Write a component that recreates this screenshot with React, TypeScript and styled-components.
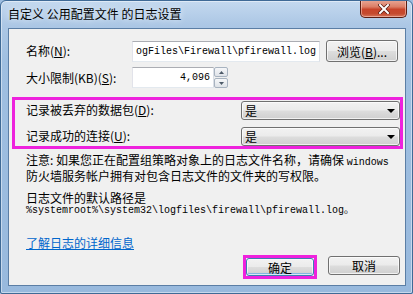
import React from "react";
import styled, { createGlobalStyle } from "styled-components";

const Global = createGlobalStyle`
  html, body { margin: 0; padding: 0; background: #9dbde0; }
  body { font-family: "Noto Sans CJK SC", "Liberation Sans", sans-serif; }
`;

const Window = styled.div`
  box-sizing: border-box;
  width: 413px;
  height: 294px;
  display: flex;
  flex-direction: column;
  padding: 0 6px 7px 7px;
  background: linear-gradient(180deg, #c4d9ef 0px, #acc7e5 24px, #9fbfe1 60px, #98b9dd 100%);
  border: 1px solid #3f6a96;
  border-radius: 6px 6px 2px 2px;
  box-shadow: inset 0 0 0 1px rgba(255, 255, 255, 0.45);
  overflow: hidden;
`;

const TitleBar = styled.div`
  height: 27px;
  display: flex;
  justify-content: space-between;
  align-items: flex-start;
`;

const Title = styled.div`
  margin-top: 6px;
  font-size: 12px;
  line-height: 14px;
  color: #000;
  white-space: nowrap;
  text-shadow: 0 0 6px rgba(255, 255, 255, 0.9);
`;

const CloseButton = styled.div`
  width: 47px;
  height: 18px;
  margin-top: -1px;
  margin-right: -1px;
  box-sizing: border-box;
  border: 1px solid #5b1d12;
  border-top: none;
  border-radius: 0 0 5px 5px;
  background: linear-gradient(180deg, #e9a897 0%, #dc7e66 40%, #c8442a 55%, #c54a2e 80%, #d6755b 100%);
  box-shadow: inset 0 0 0 1px rgba(255, 220, 210, 0.5);
  display: flex;
  align-items: center;
  justify-content: center;
`;

const Client = styled.div`
  flex: 1;
  display: flex;
  flex-direction: column;
  background: #f0f0f0;
  border: 1px solid #5b7ea5;
  font-size: 12px;
  color: #000;
`;

const Row = styled.div<{ $top: number; $h: number }>`
  display: flex;
  align-items: center;
  height: ${(p) => p.$h}px;
  margin-top: ${(p) => p.$top}px;
  padding-left: 17px;
`;

const Label = styled.div<{ $w: number }>`
  width: ${(p) => p.$w}px;
  flex: none;
  white-space: nowrap;
  line-height: 14px;
`;

const TextInput = styled.div<{ $w: number }>`
  box-sizing: border-box;
  width: ${(p) => p.$w}px;
  height: 21px;
  display: flex;
  justify-content: flex-end;
  background: #fff;
  border: 1px solid #abadb3;
  border-left-color: #e2e3ea;
  border-right-color: #dbdfe6;
  border-bottom-color: #e3e9ef;
  font-family: "Liberation Mono", monospace;
  font-size: 10px;
  line-height: 19px;
  padding: 0 3px 0 2px;
  overflow: hidden;
  white-space: nowrap;
`;

const PushButton = styled.div<{ $w: number; $h: number; $default?: boolean }>`
  box-sizing: border-box;
  width: ${(p) => p.$w}px;
  height: ${(p) => p.$h}px;
  flex: none;
  border: 1px solid ${(p) => (p.$default ? "#3c7fb1" : "#707070")};
  border-radius: 3px;
  background: linear-gradient(180deg, #f2f2f2 0%, #ebebeb 48%, #dddddd 52%, #cfcfcf 100%);
  box-shadow: inset 0 0 0 1px rgba(255, 255, 255, 0.7)${(p) =>
    p.$default ? ", inset 0 -2px 0 0 #7fb8e0" : ""};
  display: flex;
  align-items: center;
  justify-content: center;
  font-size: 12px;
  white-space: nowrap;
`;

const BrowseButton = styled(PushButton)`
  margin-left: 6px;
`;

const Spinner = styled.div`
  width: 14px;
  height: 21px;
  display: flex;
  flex-direction: column;
  gap: 1px;
`;

const SpinPart = styled.div`
  flex: 1;
  box-sizing: border-box;
  border: 1px solid #a8b3c0;
  border-radius: 2px;
  background: linear-gradient(180deg, #f6f7f9, #dfe3e8);
  display: flex;
  align-items: center;
  justify-content: center;
`;

const Highlight = styled.div`
  margin: 9px 2px 0 3px;
  border: 3px solid #ee22dd;
  display: flex;
  flex-direction: column;
  gap: 6px;
`;

const BoxRow = styled.div`
  display: flex;
  align-items: center;
  height: 20px;
  padding-left: 11px;
`;

const Select = styled.div`
  box-sizing: border-box;
  width: 159px;
  height: 19px;
  border: 1px solid #707070;
  border-radius: 3px;
  background: linear-gradient(180deg, #f2f2f2 0%, #ebebeb 48%, #dddddd 52%, #cfcfcf 100%);
  box-shadow: inset 0 0 0 1px rgba(255, 255, 255, 0.7);
  display: flex;
  align-items: center;
  justify-content: space-between;
  padding: 0 4px 0 3px;
  font-size: 12px;
`;

const Arrow = styled.div`
  width: 0;
  height: 0;
  border-left: 4px solid transparent;
  border-right: 4px solid transparent;
  border-top: 4px solid #000;
  margin-top: 1px;
`;

const Text = styled.div<{ $top: number; $lh: number; $mono?: boolean }>`
  margin-top: ${(p) => p.$top}px;
  padding-left: 17px;
  line-height: ${(p) => p.$lh}px;
  white-space: nowrap;
  font-family: ${(p) =>
    p.$mono ? '"Liberation Mono", "Noto Sans CJK SC", monospace' : '"Noto Sans CJK SC", "Liberation Sans", sans-serif'};
  font-size: ${(p) => (p.$mono ? 10 : 12)}px;
`;

const Mono = styled.span`
  font-family: "Liberation Mono", monospace;
  font-size: 10px;
`;

const Link = styled.a`
  margin-top: 20px;
  margin-left: 17px;
  align-self: flex-start;
  line-height: 12px;
  color: #0066cc;
  text-decoration: underline;
  font-size: 12px;
`;

const ButtonRow = styled.div`
  margin-top: 6px;
  display: flex;
  justify-content: flex-end;
  align-items: flex-start;
  gap: 11px;
  padding-right: 5px;
`;

const FocusMark = styled.div`
  border: 3px solid #ee22dd;
`;

const CancelWrap = styled.div`
  margin-top: 1px;
`;

const Tri = ({ up }: { up?: boolean }) => (
  <svg width="5" height="3" viewBox="0 0 5 3">
    <path d={up ? "M0 3 L2.5 0 L5 3 Z" : "M0 0 L2.5 3 L5 0 Z"} fill="#4d5a68" />
  </svg>
);

export default function App() {
  return (
    <>
      <Global />
      <Window>
        <TitleBar>
          <Title>自定义 公用配置文件 的日志设置</Title>
          <CloseButton>
            <svg width="12" height="10" viewBox="0 0 12 10">
              <path d="M2 1 L10 9 M10 1 L2 9" stroke="#5a1a10" strokeWidth="3.4" strokeLinecap="square" />
              <path d="M2 1 L10 9 M10 1 L2 9" stroke="#fff" strokeWidth="2" strokeLinecap="square" />
            </svg>
          </CloseButton>
        </TitleBar>
        <Client>
          <Row $top={11} $h={22}>
            <Label $w={106}>
              名称(<u>N</u>):
            </Label>
            <TextInput $w={188}>ogFiles\Firewall\pfirewall.log</TextInput>
            <BrowseButton $w={72} $h={22}>
              浏览(<u>B</u>)...
            </BrowseButton>
          </Row>
          <Row $top={5} $h={21}>
            <Label $w={106}>
              大小限制(KB)(<u>S</u>):
            </Label>
            <TextInput $w={82}>4,096</TextInput>
            <Spinner>
              <SpinPart>
                <Tri up />
              </SpinPart>
              <SpinPart>
                <Tri />
              </SpinPart>
            </Spinner>
          </Row>
          <Highlight>
            <BoxRow>
              <Label $w={215}>
                记录被丢弃的数据包(<u>D</u>):
              </Label>
              <Select>
                <span>是</span>
                <Arrow />
              </Select>
            </BoxRow>
            <BoxRow>
              <Label $w={215}>
                记录成功的连接(<u>U</u>):
              </Label>
              <Select>
                <span>是</span>
                <Arrow />
              </Select>
            </BoxRow>
          </Highlight>
          <Text $top={4} $lh={13}>
            注意: 如果您正在配置组策略对象上的日志文件名称，请确保 <Mono>windows</Mono>
          </Text>
          <Text $top={0} $lh={13}>
            防火墙服务帐户拥有对包含日志文件的文件夹的写权限。
          </Text>
          <Text $top={9} $lh={13}>
            日志文件的默认路径是
          </Text>
          <Text $top={0} $lh={13} $mono>
            %systemroot%\system32\logfiles\firewall\pfirewall.log。
          </Text>
          <Link href="#">了解日志的详细信息</Link>
          <ButtonRow>
            <FocusMark>
              <PushButton $w={68} $h={18} $default>
                确定
              </PushButton>
            </FocusMark>
            <CancelWrap>
              <PushButton $w={72} $h={19}>
                取消
              </PushButton>
            </CancelWrap>
          </ButtonRow>
        </Client>
      </Window>
    </>
  );
}
